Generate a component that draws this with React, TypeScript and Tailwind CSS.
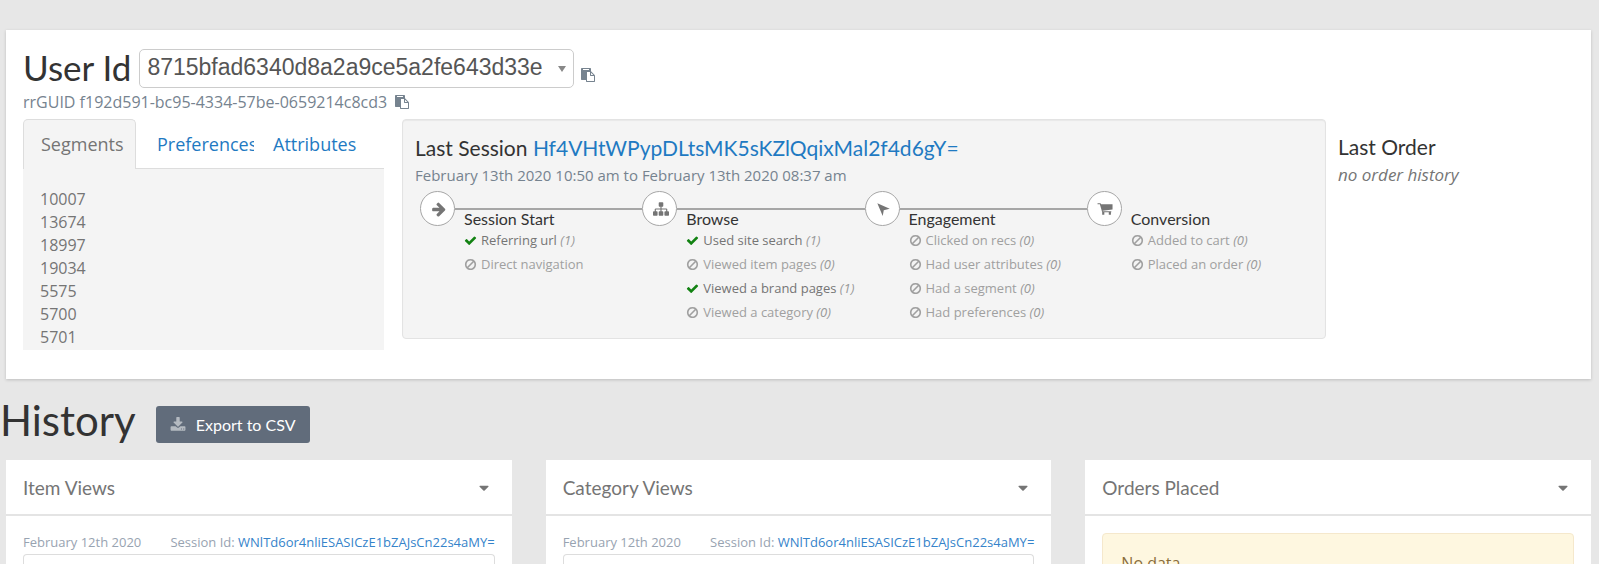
import React from "react";

const paths = {
  arrow:
    "M1600 960q0 54-37 91l-651 651q-39 37-91 37-51 0-90-37l-75-75q-38-38-38-91t38-91l293-293h-704q-52 0-84.5-37.5t-32.5-90.5v-128q0-53 32.5-90.5t84.5-37.5h704l-293-294q-38-36-38-90t38-90l75-75q38-38 90-38 53 0 91 38l651 651q37 35 37 90z",
  check:
    "M1671 566q0 40-28 68l-724 724-136 136q-28 28-68 28t-68-28l-136-136-362-362q-28-28-28-68t28-68l136-136q28-28 68-28t68 28l294 295 656-657q28-28 68-28t68 28l136 136q28 28 28 68z",
  ban: "M1440 893q0-161-87-295l-754 753q137 89 297 89 111 0 211.5-43.5t173.5-116.5 116-174.5 43-212.5zm-999 299l755-754q-135-91-300-91-148 0-273 73t-198 199-73 274q0 162 89 299zm1223-299q0 157-61 300t-163.5 246-245 164-298.5 61-298.5-61-245-164-163.5-246-61-300 61-299.5 163.5-245.5 245-164 298.5-61 298.5 61 245 164 163.5 245.5 61 299.5z",
  paste:
    "M768 1664h896v-640h-416q-40 0-68-28t-28-68v-416h-384v1152zm256-1440v-64q0-13-9.5-22.5t-22.5-9.5h-704q-13 0-22.5 9.5t-9.5 22.5v64q0 13 9.5 22.5t22.5 9.5h704q13 0 22.5-9.5t9.5-22.5zm256 672h299l-299-299v299zm512 128v672q0 40-28 68t-68 28h-960q-40 0-68-28t-28-68v-160h-544q-40 0-68-28t-28-68v-1344q0-40 28-68t68-28h1088q40 0 68 28t28 68v328q21 13 36 28l408 408q28 28 48 76t20 88z",
  caret:
    "M1408 704q0 26-19 45l-448 448q-19 19-45 19t-45-19l-448-448q-19-19-19-45t19-45 45-19h896q26 0 45 19t19 45z",
  sitemap:
    "M1792 1248v320q0 40-28 68t-68 28h-320q-40 0-68-28t-28-68v-320q0-40 28-68t68-28h96v-192h-512v192h96q40 0 68 28t28 68v320q0 40-28 68t-68 28h-320q-40 0-68-28t-28-68v-320q0-40 28-68t68-28h96v-192h-512v192h96q40 0 68 28t28 68v320q0 40-28 68t-68 28h-320q-40 0-68-28t-28-68v-320q0-40 28-68t68-28h96v-192q0-52 38-90t90-38h512v-192h-96q-40 0-68-28t-28-68v-320q0-40 28-68t68-28h320q40 0 68 28t28 68v320q0 40-28 68t-68 28h-96v192h512q52 0 90 38t38 90v192h96q40 0 68 28t28 68z",
  download:
    "M1344 1344q0-26-19-45t-45-19-45 19-19 45 19 45 45 19 45-19 19-45zm256 0q0-26-19-45t-45-19-45 19-19 45 19 45 45 19 45-19 19-45zm128-224v320q0 40-28 68t-68 28h-1472q-40 0-68-28t-28-68v-320q0-40 28-68t68-28h465l135 136q58 56 136 56t136-56l136-136h464q40 0 68 28t28 68zm-325-569q17 41-14 70l-448 448q-18 19-45 19t-45-19l-448-448q-31-29-14-70 17-39 59-39h256v-448q0-26 19-45t45-19h256q26 0 45 19t19 45v448h256q42 0 59 39z",
  pointer: "M260 260L1650 880L980 1040L865 1680Z",
  cart: "M60 240H400L450 370H1740V950L620 1080L640 1150H1600V1260H1560V1530H1320V1260H820V1530H580V1260L320 370H60Z",
};

type IconName = keyof typeof paths;

function Icon({ name, className }: { name: IconName; className: string }) {
  return (
    <svg viewBox="0 0 1792 1792" fill="currentColor" aria-hidden="true" className={className}>
      <path d={paths[name]} />
    </svg>
  );
}

type Item = { label: string; count?: number };
type Step = { title: string; icon: IconName; items: Item[] };

const steps: Step[] = [
  {
    title: "Session Start",
    icon: "arrow",
    items: [{ label: "Referring url", count: 1 }, { label: "Direct navigation" }],
  },
  {
    title: "Browse",
    icon: "sitemap",
    items: [
      { label: "Used site search", count: 1 },
      { label: "Viewed item pages", count: 0 },
      { label: "Viewed a brand pages", count: 1 },
      { label: "Viewed a category", count: 0 },
    ],
  },
  {
    title: "Engagement",
    icon: "pointer",
    items: [
      { label: "Clicked on recs", count: 0 },
      { label: "Had user attributes", count: 0 },
      { label: "Had a segment", count: 0 },
      { label: "Had preferences", count: 0 },
    ],
  },
  {
    title: "Conversion",
    icon: "cart",
    items: [
      { label: "Added to cart", count: 0 },
      { label: "Placed an order", count: 0 },
    ],
  },
];

const segments = ["10007", "13674", "18997", "19034", "5575", "5700", "5701"];

function CopyButton({ label }: { label: string }) {
  return (
    <button type="button" aria-label={label} className="cursor-pointer text-[#76838f]">
      <Icon name="paste" className="size-[14px]" />
    </button>
  );
}

function StepColumn({ step, last }: { step: Step; last: boolean }) {
  return (
    <li>
      <div className="flex items-center">
        <span className="flex size-[35px] shrink-0 items-center justify-center rounded-full border border-[#a6a6a6] bg-white pl-0.5 text-[#757575]">
          <Icon name={step.icon} className="size-4" />
        </span>
        {!last && <span className="h-0.5 flex-1 bg-[#a6a6a6]" />}
      </div>
      <div className="-mt-[17px] pl-11">
        <h4 className="font-['Lato',sans-serif] text-base leading-5 text-[#333]">{step.title}</h4>
        <ul className="-mt-px text-[13px] leading-6">
          {step.items.map((item) => (
            <li
              key={item.label}
              className={
                item.count
                  ? "flex items-center gap-1 text-[#757575]"
                  : "flex items-center gap-1 text-[#a0a0a0]"
              }
            >
              <Icon
                name={item.count ? "check" : "ban"}
                className={item.count ? "size-[13px] text-[#128212]" : "size-[13px]"}
              />
              <span>
                {item.label}
                {item.count !== undefined && <em className="text-[#999]"> ({item.count})</em>}
              </span>
            </li>
          ))}
        </ul>
      </div>
    </li>
  );
}

function Panel({ title, children }: { title: string; children: React.ReactNode }) {
  return (
    <section className="bg-white">
      <header className="flex h-14 items-center justify-between border-b-2 border-[#e4e4e4] px-[17px] pt-0.5">
        <h3 className="font-['Lato',sans-serif] text-[19px] leading-6 text-[#757575]">{title}</h3>
        <button type="button" aria-label={"Toggle " + title} className="mr-[3px] cursor-pointer text-[#757575]">
          <Icon name="caret" className="size-4" />
        </button>
      </header>
      <div className="px-[17px] pt-[17px]">{children}</div>
    </section>
  );
}

function ViewEntry() {
  return (
    <article>
      <div className="flex h-[21px] items-center justify-between pb-0.5 text-[13px] text-[#98a3b1]">
        <span>February 12th 2020</span>
        <span>
          Session Id:{" "}
          <a href="#session" className="text-[#3583ca]">
            WNlTd6or4nliESASICzE1bZAJsCn22s4aMY=
          </a>
        </span>
      </div>
      <div className="h-10 rounded-t border border-b-0 border-[#ddd]" />
    </article>
  );
}

export default function App() {
  return (
    <div className="min-h-screen bg-[#e7e7e7] pt-[30px] font-['Open_Sans',sans-serif] text-[#757575]">
      <main>
        <section className="mr-2 ml-1.5 bg-white px-[17px] pt-[19px] pb-[29px] shadow-[0_1px_3px_rgba(0,0,0,0.18)]">
          <div className="flex items-center">
            <label htmlFor="user-id" className="pb-1 font-['Lato',sans-serif] text-[35px] leading-8 text-[#333]">
              User Id
            </label>
            <div className="relative ml-2">
              <select
                id="user-id"
                className="block h-[39px] w-[435px] appearance-none rounded-[5px] border border-[#ccc] bg-white pr-5 pb-1 pl-[7px] font-['Liberation_Sans',sans-serif] text-[23px] text-[#555]"
              >
                <option>8715bfad6340d8a2a9ce5a2fe643d33e</option>
              </select>
              <span className="pointer-events-none absolute top-[17px] right-2 border-x-[4px] border-t-[6px] border-x-transparent border-t-[#888]" />
            </div>
            <div className="ml-[7px] flex pt-3">
              <CopyButton label="Copy user id" />
            </div>
          </div>
          <div className="flex h-[31px] items-center gap-2 pb-1 text-base text-[#76838f]">
            <span>rrGUID f192d591-bc95-4334-57be-0659214c8cd3</span>
            <CopyButton label="Copy rrGUID" />
          </div>

          <div className="grid grid-cols-[367fr_924fr_236fr] items-start gap-x-3">
            <div className="pr-1.5">
              <div role="tablist" className="flex text-lg">
                <button
                  type="button"
                  role="tab"
                  aria-selected="true"
                  className="h-[50px] w-[113px] rounded-t-[5px] border border-b-0 border-[#ddd] bg-[#f4f4f4] pb-px pl-[17px] text-left"
                >
                  Segments
                </button>
                <button
                  type="button"
                  role="tab"
                  aria-selected="false"
                  className="w-[118px] border-b border-[#ddd] pl-[21px] text-left text-[#1f7ac2]"
                >
                  <span className="block overflow-hidden">Preferences</span>
                </button>
                <button
                  type="button"
                  role="tab"
                  aria-selected="false"
                  className="flex-1 border-b border-[#ddd] pl-[19px] text-left text-[#1f7ac2]"
                >
                  Attributes
                </button>
              </div>
              <ul role="tabpanel" className="bg-[#f4f4f4] pt-[19px] pb-px pl-[17px] text-base leading-[23px]">
                {segments.map((id) => (
                  <li key={id}>{id}</li>
                ))}
              </ul>
            </div>

            <section className="rounded border border-[#e3e3e3] bg-[#f4f4f4] px-3 pt-4 pb-[14px] shadow-[inset_0_1px_1px_rgba(0,0,0,0.05)]">
              <h2 className="font-['Lato',sans-serif] text-[21px] leading-6 text-[#333]">
                Last Session{" "}
                <a href="#session" className="text-[#1f7ac2]">
                  Hf4VHtWPypDLtsMK5sKZlQqixMal2f4d6gY=
                </a>
              </h2>
              <p className="pt-1 text-[15px] leading-[22px] text-[#76838f]">
                February 13th 2020 10:50 am to February 13th 2020 08:37 am
              </p>
              <ol className="grid grid-cols-4 pt-[5px] pr-1 pl-[5px]">
                {steps.map((step, i) => (
                  <StepColumn key={step.title} step={step} last={i === steps.length - 1} />
                ))}
              </ol>
            </section>

            <section className="pt-4">
              <h2 className="font-['Lato',sans-serif] text-[21px] leading-6 text-[#333]">Last Order</h2>
              <p className="pt-1 text-[17px] leading-6 italic">no order history</p>
            </section>
          </div>
        </section>

        <div className="flex items-start pt-5">
          <h1 className="font-['Lato',sans-serif] text-[42px] leading-[42px] text-[#333]">History</h1>
          <button
            type="button"
            className="mt-[7px] ml-5 flex h-[37px] items-center gap-2.5 rounded-[3px] bg-[#616c7b] px-3.5 font-['Lato',sans-serif] text-base text-white"
          >
            <Icon name="download" className="size-4 text-[#b4bac1]" />
            Export to CSV
          </button>
        </div>

        <div className="mr-2 ml-1.5 grid grid-cols-3 gap-x-[34px] pt-[17px]">
          <Panel title="Item Views">
            <ViewEntry />
          </Panel>
          <Panel title="Category Views">
            <ViewEntry />
          </Panel>
          <Panel title="Orders Placed">
            <div className="rounded border border-[#f5e8cc] bg-[#fef7e0] px-[18px] py-[17px] text-base leading-6 text-[#8a6d3b]">
              No data
            </div>
          </Panel>
        </div>
      </main>
    </div>
  );
}
